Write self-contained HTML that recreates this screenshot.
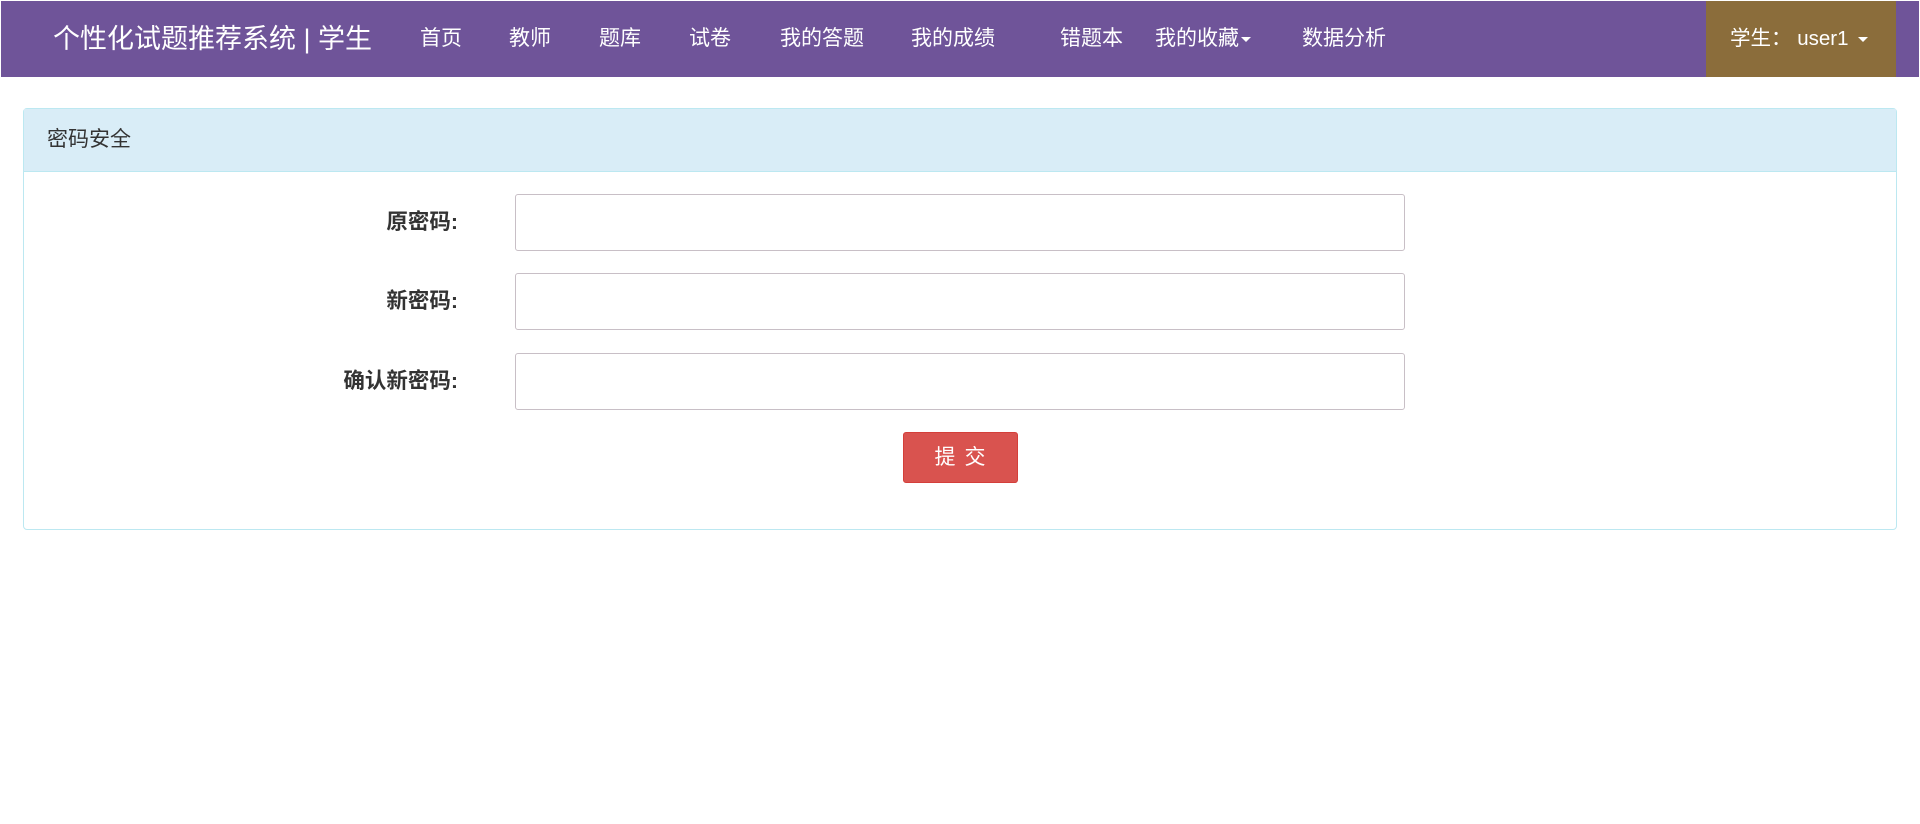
<!DOCTYPE html>
<html><head><meta charset="utf-8"><style>
*{margin:0;padding:0;box-sizing:border-box}
body{width:1920px;height:824px;background:#fff;font-family:"Liberation Sans","Noto Sans CJK SC",sans-serif;position:relative;overflow:hidden}
.nav{position:absolute;left:1px;top:1px;width:1918px;height:76px;background:#6f5499}
.nav span{position:absolute;top:0;line-height:76px;color:#fff;font-size:21px;white-space:nowrap}
.brand{font-size:27px!important;left:52px}
.user{position:absolute;left:1706px;top:1px;width:190px;height:76px;background:#8b6d3b;color:#fff;font-size:20.5px;line-height:76px;padding-left:24px;white-space:nowrap}
.caret{display:inline-block;width:0;height:0;border-left:5px solid transparent;border-right:5px solid transparent;border-top:5px solid #fff;vertical-align:middle;margin-left:6px}
.panel{position:absolute;left:23px;top:108px;width:1874px;height:422px;border:1px solid #bce8f1;border-radius:4px}
.ph{height:63px;background:#d9edf7;border-bottom:1px solid #bce8f1;color:#333;font-size:21px;line-height:62px;padding-left:23px}
.lbl{position:absolute;right:1462px;font-weight:bold;font-size:21.5px;color:#333;line-height:57px;white-space:nowrap}
.inp{position:absolute;left:515px;width:890px;height:57px;border:1px solid #c8bfc6;border-radius:3px}
.btn{position:absolute;left:903px;top:432px;width:115px;height:51px;background:#d9534f;border:1px solid #d43f3a;border-radius:3px;color:#fff;font-size:21px;text-align:center;line-height:49px;letter-spacing:9px;padding-left:8px}
</style></head><body>
<div class="nav">
<span class="brand">个性化试题推荐系统 | 学生</span>
<span style="left:419px">首页</span>
<span style="left:508px">教师</span>
<span style="left:598px">题库</span>
<span style="left:688px">试卷</span>
<span style="left:779px">我的答题</span>
<span style="left:910px">我的成绩</span>
<span style="left:1059px">错题本</span>
<span style="left:1154px">我的收藏<i class="caret" style="margin-left:2px"></i></span>
<span style="left:1301px">数据分析</span>
</div>
<div class="user">学生： user1<i class="caret" style="margin-left:10px"></i></div>
<div class="panel"><div class="ph">密码安全</div></div>
<div class="lbl" style="top:194px">原密码:</div>
<div class="inp" style="top:194px"></div>
<div class="lbl" style="top:273px">新密码:</div>
<div class="inp" style="top:273px"></div>
<div class="lbl" style="top:353px">确认新密码:</div>
<div class="inp" style="top:353px"></div>
<div class="btn">提交</div>
</body></html>
